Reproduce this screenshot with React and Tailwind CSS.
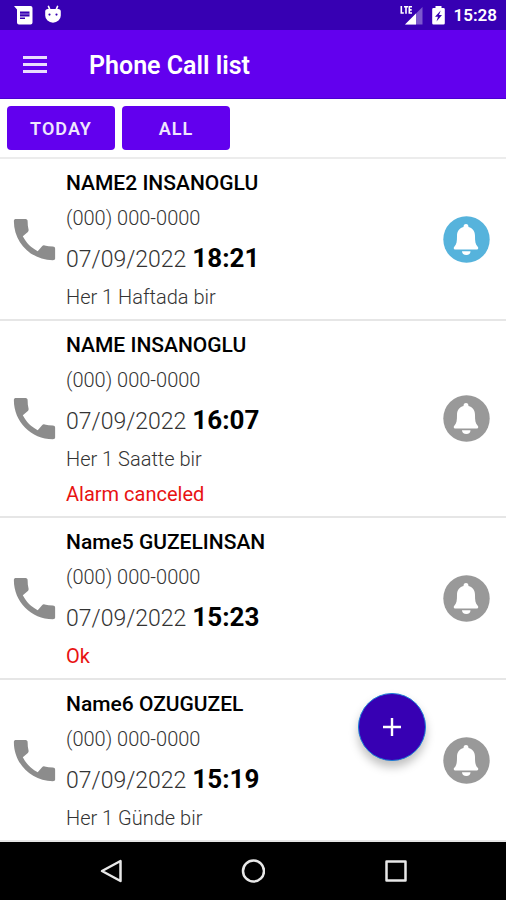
import { useState } from 'react';

const calls = [
  {
    id: 1,
    name: 'NAME2 INSANOGLU',
    phone: '(000) 000-0000',
    date: '07/09/2022',
    time: '18:21',
    repeat: 'Her 1 Haftada bir',
    active: true,
  },
  {
    id: 2,
    name: 'NAME INSANOGLU',
    phone: '(000) 000-0000',
    date: '07/09/2022',
    time: '16:07',
    repeat: 'Her 1 Saatte bir',
    status: 'Alarm canceled',
    active: false,
  },
  {
    id: 3,
    name: 'Name5 GUZELINSAN',
    phone: '(000) 000-0000',
    date: '07/09/2022',
    time: '15:23',
    status: 'Ok',
    active: false,
  },
  {
    id: 4,
    name: 'Name6 OZUGUZEL',
    phone: '(000) 000-0000',
    date: '07/09/2022',
    time: '15:19',
    repeat: 'Her 1 Günde bir',
    active: false,
  },
];

function StatusBar() {
  return (
    <div className="h-[30px] bg-[#3700b3] text-white flex items-center justify-between pl-[14px] pr-[9px]">
      <div className="flex items-center gap-3">
        {/* Message */}
        <svg className="w-[19px] h-[20px]" viewBox="0 0 19 20">
          <path
            fill="#fff"
            fillRule="evenodd"
            d="M0 1h16.500a2 2 0 0 1 2 2v14.500a2 2 0 0 1-2 2H5a2 2 0 0 1-2-2V4.500zM6 6.500v5h9.500v-5zM6 12.500v1.500h5v-1.500z"
          />
          <path d="M6 9h9.500" stroke="#fff" strokeOpacity="0.500" strokeWidth="1" />
        </svg>
        {/* Android head */}
        <svg className="w-[16px] h-[20px]" viewBox="0 0 16 20">
          <path d="M3.500 1.500L5 5M12.500 1.500L11 5" stroke="#fff" strokeWidth="1.700" strokeLinecap="round" />
          <path
            fill="#fff"
            fillRule="evenodd"
            d="M3 4h10a2.800 2.800 0 0 1 2.800 3v3.500a7.800 7.200 0 0 1-15.600 0V7A2.800 2.800 0 0 1 3 4zM4.500 8.500a1.100 1.100 0 1 0 0 2.200a1.100 1.100 0 0 0 0-2.200zM11.500 8.500a1.100 1.100 0 1 0 0 2.200a1.100 1.100 0 0 0 0-2.200z"
          />
        </svg>
      </div>

      <div className="flex items-center">
        {/* LTE signal */}
        <svg className="w-[23px] h-[20px] mr-[9px]" viewBox="0 0 23 20">
          <path d="M22.500 2v17.500H5z" fill="#fff" fillOpacity="0.350" />
          <path d="M16 8.500v11H5z" fill="#fff" />
          <path
            d="M1.300 1v7h2.500M4 1.800h4M6 1.800v6.900M12 1.800H9.300V8H12M9.300 4.900h2.400"
            fill="none"
            stroke="#fff"
            strokeWidth="1.600"
          />
        </svg>
        {/* Battery charging */}
        <svg className="w-[13px] h-[20px] mr-[9px]" viewBox="0 0 13 20">
          <path
            fill="#fff"
            fillRule="evenodd"
            d="M3.500 1h6v2h2A1.300 1.300 0 0 1 12.800 4.300v14a1.300 1.300 0 0 1-1.300 1.300h-10A1.300 1.300 0 0 1 .2 18.300v-14A1.300 1.300 0 0 1 1.500 3h2zM8.700 5.500L3 11.800H6L4.500 16.500L10 10H7z"
          />
        </svg>
        <span className="text-[17px] leading-[30px] font-semibold">15:28</span>
      </div>
    </div>
  );
}

function AppBar() {
  return (
    <header className="h-[69px] pt-[3px] bg-[#6200ee] border-b border-[#4a00d0] text-white flex items-center pl-[23px]">
      <button type="button" aria-label="Menu" className="w-6 h-6">
        <svg className="w-6 h-6" viewBox="0 0 24 24" fill="#e9dcfd">
          <path d="M0 2h24v3H0zM0 9h24v3H0zM0 16h24v3H0z" />
        </svg>
      </button>
      <h1 className="ml-[42px] text-[25px] leading-8 font-semibold">Phone Call list</h1>
    </header>
  );
}

function FilterButton({ label, selected, onClick }) {
  return (
    <button
      type="button"
      aria-pressed={selected}
      onClick={onClick}
      className="w-[108px] h-11 pt-[2px] rounded bg-[#6200ee] text-[#efe6fd] text-[18px] leading-6 font-semibold tracking-[1px]"
    >
      {label}
    </button>
  );
}

function BellIcon({ active }) {
  return (
    <svg className={`w-[47px] h-[47px] ${active ? 'text-[#56b3dc]' : 'text-[#999999]'}`} viewBox="0 0 47 47">
      <circle cx="23.500" cy="23.500" r="23.200" fill="currentColor" />
      <path
        fill="#fff"
        d="M23 8c1.700 0 2.500 1 2.500 3c4.500 1.200 6.500 4.500 6.500 9c0 5 .3 8.500 2.700 10.800c1 .9.600 2.700-.7 2.700H12c-1.300 0-1.700-1.800-.7-2.700C13.700 28.500 14 25 14 20c0-4.500 2-7.800 6.500-9c0-2 .8-3 2.500-3z"
      />
      <path fill="#fff" d="M19 35.300h8.500c0 2.200-1.500 3.700-4.200 3.700s-4.300-1.500-4.300-3.700z" />
    </svg>
  );
}

function CallItem({ call }) {
  return (
    <li className="flex items-center pl-[7px] pr-4 border-b-2 border-[#e6e6e6]">
      <svg className="w-[55px] h-[55px] shrink-0" viewBox="0 0 24 24" fill="#8c8c8c">
        <path d="M6.900 10.600c1.400 2.800 3.700 5.100 6.500 6.500l1.900-2.200c.300-.300.700-.4 1.100-.3 1.100.3 2.300.4 3.600.4.600 0 1 .3 1 .9V20.300c0 .5-.4.700-1 .7C10.600 21 3 13.400 3 4c0-.600.200-1 .700-1h4.400c.600 0 .9.400.9 1 0 1.300.1 2.500.4 3.600.1.400 0 .8-.3 1.100z" />
      </svg>
      <div className="flex-1 min-w-0 ml-1 pt-[7px] pb-1">
        <h2 className="text-[21px] leading-[34px] font-medium text-black">{call.name}</h2>
        <p className="text-[20px] leading-9 font-light text-[#333333]">{call.phone}</p>
        <p className="flex items-baseline gap-[6px] h-[44px] leading-[44px]">
          <span className="text-[23px] font-light text-[#333333]">{call.date}</span>
          <span className="text-[26px] font-bold text-black">{call.time}</span>
        </p>
        {call.repeat && <p className="text-[20px] leading-[35px] font-light text-[#333333]">{call.repeat}</p>}
        {call.status && <p className="text-[20px] leading-[35px] text-[#e81212]">{call.status}</p>}
      </div>
      <BellIcon active={call.active} />
    </li>
  );
}

function NavBar() {
  return (
    <nav className="h-[58px] bg-black grid grid-cols-3 items-center px-10">
      <button type="button" aria-label="Back" className="flex justify-center">
        <svg className="w-6 h-6" viewBox="0 0 24 24" fill="none" stroke="#e8e8e8" strokeWidth="2.500" strokeLinejoin="round">
          <path d="M21.500 2v20L3 12z" />
        </svg>
      </button>
      <button type="button" aria-label="Home" className="flex justify-center">
        <svg className="w-6 h-6" viewBox="0 0 24 24" fill="none" stroke="#e8e8e8" strokeWidth="2.500">
          <circle cx="12.500" cy="12" r="10.500" />
        </svg>
      </button>
      <button type="button" aria-label="Recents" className="flex justify-center">
        <svg className="w-6 h-6" viewBox="0 0 24 24" fill="none" stroke="#e8e8e8" strokeWidth="2.500" strokeLinejoin="round">
          <path d="M3.500 2.500h19v19h-19z" />
        </svg>
      </button>
    </nav>
  );
}

export default function App() {
  const [filter, setFilter] = useState('all');

  return (
    <div className="min-h-screen flex flex-col bg-white font-['Roboto',sans-serif]">
      <StatusBar />
      <AppBar />

      <main className="relative flex-1">
        <div className="flex gap-[7px] p-[7px] border-b-2 border-[#ececec]">
          <FilterButton label="TODAY" selected={filter === 'today'} onClick={() => setFilter('today')} />
          <FilterButton label="ALL" selected={filter === 'all'} onClick={() => setFilter('all')} />
        </div>

        <ul>
          {calls.map((call) => (
            <CallItem key={call.id} call={call} />
          ))}
        </ul>

        {/* Add call */}
        <button
          type="button"
          aria-label="Add call"
          className="absolute right-20 bottom-[81px] w-[68px] h-[68px] rounded-full bg-[#3700b3] border border-[#1c7fd6] shadow-[0_6px_10px_rgba(0,0,0,0.25)] flex items-center justify-center"
        >
          <svg className="w-[18px] h-[18px]" viewBox="0 0 18 18" fill="#fff">
            <path d="M7.800 0h2.400v7.800H18v2.400h-7.800V18H7.800v-7.800H0V7.800h7.800z" />
          </svg>
        </button>
      </main>

      <NavBar />
    </div>
  );
}
